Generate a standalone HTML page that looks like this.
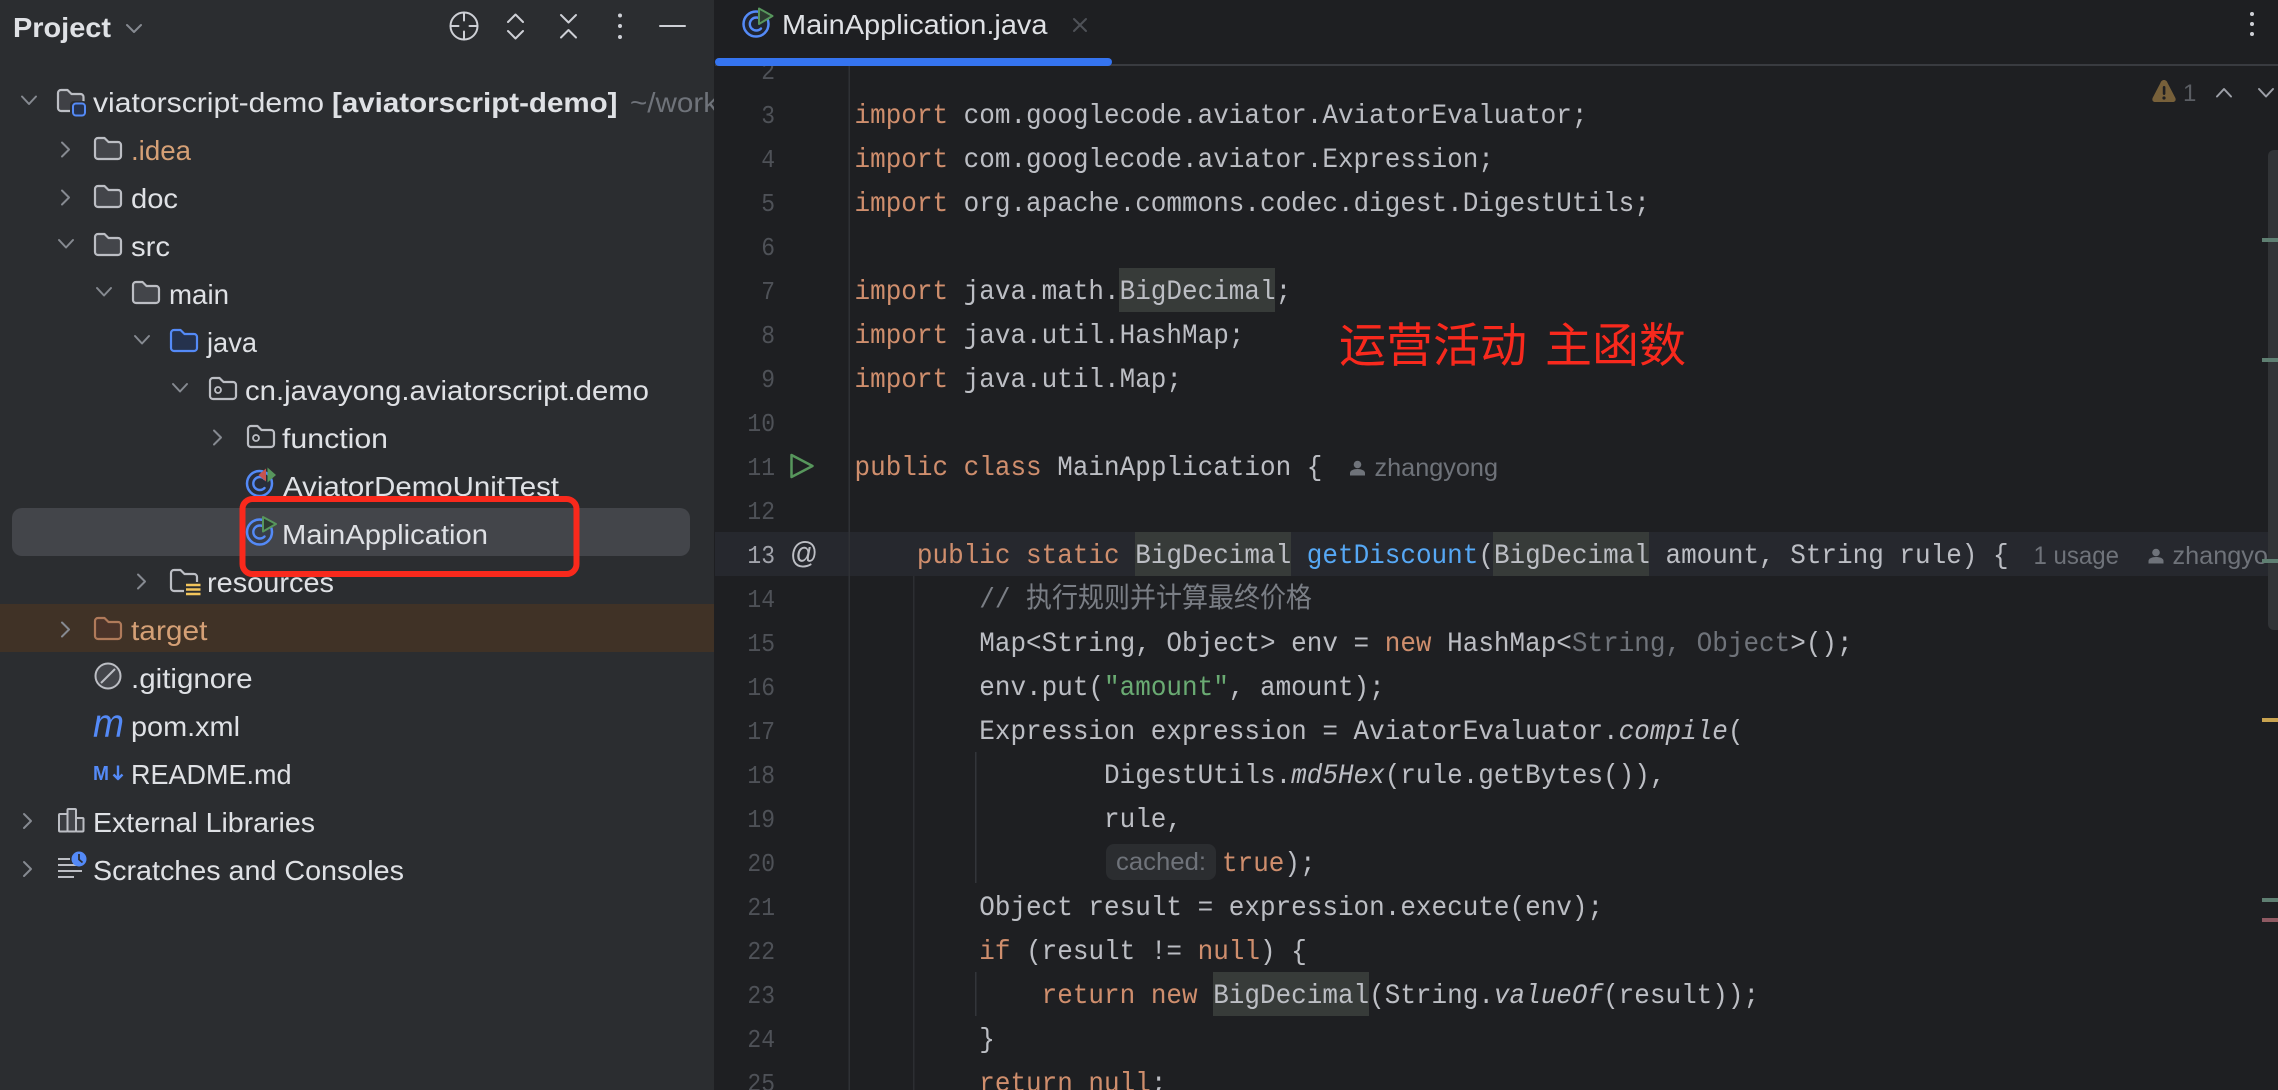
<!DOCTYPE html>
<html lang="en">
<head>
<meta charset="utf-8">
<title>MainApplication.java</title>
<style>
html,body{margin:0;padding:0;background:#1e1f22;width:2278px;height:1090px;overflow:hidden}
svg{display:block}
text{white-space:pre}
.ui{font-family:"Liberation Sans","Noto Sans CJK SC",sans-serif;font-size:28px;fill:#dfe1e5}
.code{font-family:"Liberation Mono","Noto Sans CJK SC",monospace;font-size:26px;fill:#bcbec4}
.num{font-family:"Liberation Mono",monospace;font-size:23px;fill:#4e5157;text-anchor:end}
.k{fill:#cf8e6d}.m{fill:#56a8f5}.s{fill:#6aab73}.c{fill:#7a7e85}.g{fill:#6f737a}.i{font-style:italic}
.hint{font-family:"Liberation Sans",sans-serif;font-size:25px;fill:#6f737a}
.ch{fill:none;stroke:#868a91;stroke-width:2;stroke-linecap:round;stroke-linejoin:round}
.tb{fill:none;stroke:#ced0d6;stroke-width:2;stroke-linecap:round;stroke-linejoin:round}
.fd{fill:#43454a;stroke:#bcbec4;stroke-width:2.2;stroke-linejoin:round}
.fb{fill:#25324d;stroke:#548af7;stroke-width:2.2;stroke-linejoin:round}
.fo{fill:#4b3329;stroke:#b07a5a;stroke-width:2.2;stroke-linejoin:round}
.fp{fill:none;stroke:#bcbec4;stroke-width:2.2;stroke-linejoin:round}
</style>
</head>
<body>
<svg xmlns="http://www.w3.org/2000/svg" width="2278" height="1090" viewBox="0 0 2278 1090">
<rect width="2278" height="1090" fill="#1e1f22"/>

<!-- editor backgrounds -->
<rect x="715" y="532" width="1563" height="44" fill="#26282e"/>
<rect x="1119" y="268" width="156" height="44" fill="#373b39"/>
<rect x="1135" y="532" width="156" height="44" fill="#373b39"/>
<rect x="1493" y="532" width="156" height="44" fill="#373b39"/>
<rect x="1213" y="972" width="156" height="44" fill="#373b39"/>
<rect x="848.5" y="66" width="1.5" height="1024" fill="#2f3135"/>
<rect x="913" y="576" width="1.5" height="514" fill="#2c2e32"/>
<rect x="975" y="752" width="1.5" height="131" fill="#33353a"/>
<rect x="975" y="972" width="1.5" height="44" fill="#33353a"/>

<!-- line numbers -->
<g class="num">
<text transform="translate(775,79) scale(1,1.12)">2</text>
<text transform="translate(775,123) scale(1,1.12)">3</text>
<text transform="translate(775,167) scale(1,1.12)">4</text>
<text transform="translate(775,211) scale(1,1.12)">5</text>
<text transform="translate(775,255) scale(1,1.12)">6</text>
<text transform="translate(775,299) scale(1,1.12)">7</text>
<text transform="translate(775,343) scale(1,1.12)">8</text>
<text transform="translate(775,387) scale(1,1.12)">9</text>
<text transform="translate(775,431) scale(1,1.12)">10</text>
<text transform="translate(775,475) scale(1,1.12)">11</text>
<text transform="translate(775,519) scale(1,1.12)">12</text>
<text transform="translate(775,563) scale(1,1.12)" style="fill:#a1a3ab">13</text>
<text transform="translate(775,607) scale(1,1.12)">14</text>
<text transform="translate(775,651) scale(1,1.12)">15</text>
<text transform="translate(775,695) scale(1,1.12)">16</text>
<text transform="translate(775,739) scale(1,1.12)">17</text>
<text transform="translate(775,783) scale(1,1.12)">18</text>
<text transform="translate(775,827) scale(1,1.12)">19</text>
<text transform="translate(775,871) scale(1,1.12)">20</text>
<text transform="translate(775,915) scale(1,1.12)">21</text>
<text transform="translate(775,959) scale(1,1.12)">22</text>
<text transform="translate(775,1003) scale(1,1.12)">23</text>
<text transform="translate(775,1047) scale(1,1.12)">24</text>
<text transform="translate(775,1091) scale(1,1.12)">25</text>
</g>

<!-- gutter icons -->
<path d="M791.5 455 L812.5 466 L791.5 477 Z" fill="none" stroke="#57965c" stroke-width="2.5" stroke-linejoin="round"/>
<text x="790" y="563" class="ui" style="font-size:31px;fill:#bcbec4" textLength="28" lengthAdjust="spacingAndGlyphs">@</text>

<!-- code -->
<g class="code">
<text transform="translate(854.5,123) scale(1,1.08)"><tspan class="k">import</tspan> com.googlecode.aviator.AviatorEvaluator;</text>
<text transform="translate(854.5,167) scale(1,1.08)"><tspan class="k">import</tspan> com.googlecode.aviator.Expression;</text>
<text transform="translate(854.5,211) scale(1,1.08)"><tspan class="k">import</tspan> org.apache.commons.codec.digest.DigestUtils;</text>
<text transform="translate(854.5,299) scale(1,1.08)"><tspan class="k">import</tspan> java.math.BigDecimal;</text>
<text transform="translate(854.5,343) scale(1,1.08)"><tspan class="k">import</tspan> java.util.HashMap;</text>
<text transform="translate(854.5,387) scale(1,1.08)"><tspan class="k">import</tspan> java.util.Map;</text>
<text transform="translate(854.5,475) scale(1,1.08)"><tspan class="k">public class</tspan> MainApplication {</text>
<text transform="translate(854.5,563) scale(1,1.08)">    <tspan class="k">public static</tspan> BigDecimal <tspan class="m">getDiscount</tspan>(BigDecimal amount, String rule) {</text>
<text transform="translate(854.5,607) scale(1,1.08)" class="c">        // <tspan style="font-size:26px">执行规则并计算最终价格</tspan></text>
<text transform="translate(854.5,651) scale(1,1.08)">        Map&lt;String, Object&gt; env = <tspan class="k">new</tspan> HashMap&lt;<tspan class="g">String, Object</tspan>&gt;();</text>
<text transform="translate(854.5,695) scale(1,1.08)">        env.put(<tspan class="s">"amount"</tspan>, amount);</text>
<text transform="translate(854.5,739) scale(1,1.08)">        Expression expression = AviatorEvaluator.<tspan class="i">compile</tspan>(</text>
<text transform="translate(854.5,783) scale(1,1.08)">                DigestUtils.<tspan class="i">md5Hex</tspan>(rule.getBytes()),</text>
<text transform="translate(854.5,827) scale(1,1.08)">                rule,</text>
<text transform="translate(1222,871) scale(1,1.08)"><tspan class="k">true</tspan>);</text>
<text transform="translate(854.5,915) scale(1,1.08)">        Object result = expression.execute(env);</text>
<text transform="translate(854.5,959) scale(1,1.08)">        <tspan class="k">if</tspan> (result != <tspan class="k">null</tspan>) {</text>
<text transform="translate(854.5,1003) scale(1,1.08)">            <tspan class="k">return new</tspan> BigDecimal(String.<tspan class="i">valueOf</tspan>(result));</text>
<text transform="translate(854.5,1047) scale(1,1.08)">        }</text>
<text transform="translate(854.5,1091) scale(1,1.08)">        <tspan class="k">return null</tspan>;</text>
</g>

<!-- inlay hints -->
<rect x="1106" y="844" width="110" height="36" rx="8" fill="#2b2d30"/>
<text x="1116" y="870" class="hint" textLength="90" lengthAdjust="spacingAndGlyphs">cached:</text>
<g fill="#6f737a">
<circle cx="1357.5" cy="464.5" r="3.8"/><path d="M1350 475.5v-2.5c0-2.5 3.5-4 7.5-4s7.5 1.500 7.500 4v2.500z"/>
<circle cx="2156" cy="552.500" r="3.800"/><path d="M2148.500 563.500v-2.500c0-2.500 3.500-4 7.500-4s7.500 1.500 7.500 4v2.500z"/>
</g>
<text x="1374.500" y="476" class="hint" textLength="123.500" lengthAdjust="spacingAndGlyphs">zhangyong</text>
<text x="2033.500" y="564" class="hint" textLength="85.500" lengthAdjust="spacingAndGlyphs">1 usage</text>
<text x="2172.500" y="564" class="hint" textLength="123.500" lengthAdjust="spacingAndGlyphs">zhangyong</text>

<!-- annotation -->
<g style="font-family:'Liberation Sans','Noto Sans CJK SC',sans-serif;font-size:47px;fill:#f8291d">
<text x="1339" y="362">运营活动</text>
<text x="1545" y="362">主函数</text>
</g>

<!-- scrollbar and stripes -->
<path d="M2278 150h-4a6 6 0 0 0-6 6v468a6 6 0 0 0 6 6h4z" fill="#323437"/>
<rect x="2262" y="238" width="16" height="4" fill="#5f7f72"/>
<rect x="2262" y="358" width="16" height="4" fill="#5f7f72"/>
<rect x="2262" y="559" width="16" height="4" fill="#5f7f72"/>
<rect x="2262" y="718" width="16" height="4" fill="#c9a350"/>
<rect x="2262" y="898" width="16" height="4" fill="#5f7f72"/>
<rect x="2262" y="918" width="16" height="4" fill="#8f5a63"/>

<!-- warning + navigation -->
<path d="M2164 80c1.800 0 3 1.200 3.600 3l7.800 15c.8 2-.2 4-2.400 4h-18c-2.200 0-3.200-2-2.400-4l7.800-15c.6-1.800 1.800-3 3.600-3z" fill="#77603a"/>
<rect x="2162.800" y="86" width="2.600" height="9" rx="1.200" fill="#1e1f22"/>
<circle cx="2164" cy="98" r="1.600" fill="#1e1f22"/>
<text x="2183" y="101" class="ui" style="font-size:24px;fill:#5b5e64">1</text>
<path d="M2217 96.500l7-7.500 7 7.500M2259 89l7 7.500 7-7.500" fill="none" stroke="#9da0a8" stroke-width="2" stroke-linecap="round" stroke-linejoin="round"/>

<!-- tab bar -->
<rect x="715" y="0" width="1563" height="64" fill="#1e1f22"/>
<rect x="715" y="64" width="1563" height="2" fill="#393b40"/>
<rect x="715" y="58" width="397" height="8" rx="4" fill="#3574f0"/>
<g transform="translate(496.500,-508)">
<circle cx="259.500" cy="532" r="12.500" fill="#25324d" fill-opacity=".35" stroke="#548af7" stroke-width="2.500"/>
<path d="M264.500 527.500a6.500 6.500 0 1 0 0 9" fill="none" stroke="#548af7" stroke-width="2.400" stroke-linecap="round"/>
<path d="M262.500 516.500L276 524 262.500 532Z" fill="#2d3a30" stroke="#57965c" stroke-width="2" stroke-linejoin="round"/>
</g>
<text x="782" y="34" class="ui" textLength="265.500" lengthAdjust="spacingAndGlyphs">MainApplication.java</text>
<path d="M1074 19l12 12M1086 19l-12 12" fill="none" stroke="#4e5157" stroke-width="2" stroke-linecap="round"/>
<g fill="#ced0d6"><circle cx="2252" cy="14" r="2"/><circle cx="2252" cy="24" r="2"/><circle cx="2252" cy="34" r="2"/></g>

<!-- sidebar -->
<rect x="0" y="0" width="714" height="1090" fill="#2b2d30"/>
<rect x="0" y="604" width="714" height="48" fill="#403226"/>
<rect x="12" y="508" width="678" height="48" rx="10" fill="#43454a"/>

<!-- header -->
<text x="13" y="37" class="ui" style="font-weight:700" textLength="98" lengthAdjust="spacingAndGlyphs">Project</text>
<path d="M127 25l7 7 7-7" class="ch"/>
<g class="tb">
<circle cx="464" cy="26" r="13.500"/>
<path d="M464 12.500v8M464 31.500v8M450.500 26h8M469.500 26h8"/>
<path d="M508 22l7.500-7.500 7.500 7.500M508 31l7.500 7.500 7.500-7.500"/>
<path d="M561 15l7.500 7.500 7.500-7.500M561 37.500l7.500-7.500 7.500 7.500"/>
<path d="M660 26h25"/>
</g>
<g fill="#ced0d6"><circle cx="620" cy="15.500" r="2"/><circle cx="620" cy="26" r="2"/><circle cx="620" cy="37" r="2"/></g>

<!-- tree chevrons -->
<g class="ch">
<path d="M22 96.500l7 7.500 7-7.500"/>
<path d="M62 142.500l7 7-7 7"/>
<path d="M62 190.500l7 7-7 7"/>
<path d="M59 240l7 7.500 7-7.500"/>
<path d="M97 288l7 7.500 7-7.500"/>
<path d="M135 336l7 7.500 7-7.500"/>
<path d="M173 384l7 7.500 7-7.500"/>
<path d="M214 430.500l7 7-7 7"/>
<path d="M138 574.500l7 7-7 7"/>
<path d="M62 622.500l7 7-7 7"/>
<path d="M24 814l7 7-7 7"/>
<path d="M24 862l7 7-7 7"/>
</g>

<!-- folders -->
<path transform="translate(57,89)" class="fd" style="fill:#3f4045" d="M1 4a3 3 0 0 1 3-3h6.500l4 4h9a3 3 0 0 1 3 3v11a3 3 0 0 1-3 3h-19.500a3 3 0 0 1-3-3z"/>
<rect x="70" y="101" width="17" height="16" rx="4" fill="#2b2d30"/>
<rect x="73" y="103.500" width="12" height="12" rx="3" fill="#25324d" stroke="#548af7" stroke-width="2"/>
<path transform="translate(94,137)" class="fd" d="M1 4a3 3 0 0 1 3-3h6.500l4 4h9.500a3 3 0 0 1 3 3v11a3 3 0 0 1-3 3h-20a3 3 0 0 1-3-3z"/>
<path transform="translate(94,185)" class="fd" d="M1 4a3 3 0 0 1 3-3h6.500l4 4h9.500a3 3 0 0 1 3 3v11a3 3 0 0 1-3 3h-20a3 3 0 0 1-3-3z"/>
<path transform="translate(94,233)" class="fd" d="M1 4a3 3 0 0 1 3-3h6.500l4 4h9.500a3 3 0 0 1 3 3v11a3 3 0 0 1-3 3h-20a3 3 0 0 1-3-3z"/>
<path transform="translate(132,281)" class="fd" d="M1 4a3 3 0 0 1 3-3h6.500l4 4h9.500a3 3 0 0 1 3 3v11a3 3 0 0 1-3 3h-20a3 3 0 0 1-3-3z"/>
<path transform="translate(170,329)" class="fb" d="M1 4a3 3 0 0 1 3-3h6.500l4 4h9.500a3 3 0 0 1 3 3v11a3 3 0 0 1-3 3h-20a3 3 0 0 1-3-3z"/>
<path transform="translate(209,377)" class="fp" d="M1 4a3 3 0 0 1 3-3h6.500l4 4h9.500a3 3 0 0 1 3 3v11a3 3 0 0 1-3 3h-20a3 3 0 0 1-3-3z"/>
<circle cx="218" cy="390" r="3" fill="none" stroke="#bcbec4" stroke-width="1.800"/>
<path transform="translate(247,425)" class="fp" d="M1 4a3 3 0 0 1 3-3h6.500l4 4h9.500a3 3 0 0 1 3 3v11a3 3 0 0 1-3 3h-20a3 3 0 0 1-3-3z"/>
<circle cx="256" cy="438" r="3" fill="none" stroke="#bcbec4" stroke-width="1.800"/>
<path transform="translate(170,569)" class="fp" d="M1 4a3 3 0 0 1 3-3h6.500l4 4h9.500a3 3 0 0 1 3 3v11a3 3 0 0 1-3 3h-20a3 3 0 0 1-3-3z"/>
<rect x="184" y="582" width="18" height="14" fill="#2b2d30"/>
<path d="M186 585h14.500M186 589.500h14.500M186 594h14.500" stroke="#f2c55c" stroke-width="2.400" fill="none"/>
<path transform="translate(94,617)" class="fo" d="M1 4a3 3 0 0 1 3-3h6.500l4 4h9.500a3 3 0 0 1 3 3v11a3 3 0 0 1-3 3h-20a3 3 0 0 1-3-3z"/>

<!-- class icons -->
<g transform="translate(0,-48.500)">
<circle cx="259.500" cy="532" r="12.500" fill="#25324d" fill-opacity=".35" stroke="#548af7" stroke-width="2.500"/>
<path d="M264.500 527.500a6.500 6.500 0 1 0 0 9" fill="none" stroke="#548af7" stroke-width="2.400" stroke-linecap="round"/>
<path d="M266 517L258.500 523.500 266 530Z" fill="#c75450"/>
<path d="M267.500 516L276 523.500 267.500 531Z" fill="#57965c"/>
</g>
<circle cx="259.500" cy="532" r="12.500" fill="#25324d" fill-opacity=".35" stroke="#548af7" stroke-width="2.500"/>
<path d="M264.500 527.500a6.500 6.500 0 1 0 0 9" fill="none" stroke="#548af7" stroke-width="2.400" stroke-linecap="round"/>
<path d="M263 517L276 524 263 531.500Z" fill="#2d3a30" stroke="#57965c" stroke-width="2" stroke-linejoin="round"/>

<!-- file icons -->
<circle cx="108" cy="676" r="12.500" fill="#43454a" stroke="#bcbec4" stroke-width="2"/>
<path d="M101 683l14-14" stroke="#bcbec4" stroke-width="2" fill="none"/>
<text x="93" y="737" class="ui" style="font-size:40px;font-style:italic;fill:#548af7" textLength="31" lengthAdjust="spacingAndGlyphs">m</text>
<text x="93" y="780" class="ui" style="font-size:20px;font-weight:700;fill:#548af7" textLength="16" lengthAdjust="spacingAndGlyphs">M</text>
<path d="M118 765.500v13M113.500 774.500l4.500 4.500 4.500-4.500" fill="none" stroke="#548af7" stroke-width="2.400" stroke-linejoin="round"/>

<!-- library + scratches -->
<g fill="#3a3c40" stroke="#bcbec4" stroke-width="2" stroke-linejoin="round">
<rect x="59" y="814" width="8.500" height="17.500" rx="1"/>
<rect x="67.500" y="809" width="8.500" height="22.500" rx="1" fill="#43454a"/>
<rect x="76" y="818" width="7.500" height="13.500" rx="1"/>
</g>
<path d="M58 859h12M58 865h19M58 871h24M58 877h16" stroke="#bcbec4" stroke-width="2" fill="none"/>
<circle cx="79" cy="859" r="7.500" fill="#548af7"/>
<path d="M79 854v5.500l3.500 3" stroke="#2b2d30" stroke-width="1.800" fill="none"/>

<!-- tree labels -->
<text x="93" y="112" class="ui" textLength="231" lengthAdjust="spacingAndGlyphs">viatorscript-demo</text>
<text x="332" y="112" class="ui" style="font-weight:700" textLength="285.500" lengthAdjust="spacingAndGlyphs">[aviatorscript-demo]</text>
<svg x="625" y="80" width="89" height="50"><text x="5" y="32" class="ui" style="fill:#6f737a" textLength="88" lengthAdjust="spacingAndGlyphs">~/work</text></svg>
<text x="131" y="160" class="ui" style="fill:#d5a076" textLength="60" lengthAdjust="spacingAndGlyphs">.idea</text>
<text x="131" y="208" class="ui" textLength="47" lengthAdjust="spacingAndGlyphs">doc</text>
<text x="131" y="256" class="ui" textLength="39" lengthAdjust="spacingAndGlyphs">src</text>
<text x="169" y="304" class="ui" textLength="60" lengthAdjust="spacingAndGlyphs">main</text>
<text x="207" y="352" class="ui" textLength="50" lengthAdjust="spacingAndGlyphs">java</text>
<text x="245" y="400" class="ui" textLength="404" lengthAdjust="spacingAndGlyphs">cn.javayong.aviatorscript.demo</text>
<text x="282" y="448" class="ui" textLength="106" lengthAdjust="spacingAndGlyphs">function</text>
<text x="283" y="496" class="ui" textLength="276" lengthAdjust="spacingAndGlyphs">AviatorDemoUnitTest</text>
<text x="282" y="544" class="ui" textLength="206" lengthAdjust="spacingAndGlyphs">MainApplication</text>
<text x="207" y="592" class="ui" textLength="127" lengthAdjust="spacingAndGlyphs">resources</text>
<text x="131" y="640" class="ui" style="fill:#d5a076" textLength="76.500" lengthAdjust="spacingAndGlyphs">target</text>
<text x="131" y="688" class="ui" textLength="121.500" lengthAdjust="spacingAndGlyphs">.gitignore</text>
<text x="131" y="736" class="ui" textLength="109" lengthAdjust="spacingAndGlyphs">pom.xml</text>
<text x="131" y="784" class="ui" textLength="160.500" lengthAdjust="spacingAndGlyphs">README.md</text>
<text x="93" y="832" class="ui" textLength="222" lengthAdjust="spacingAndGlyphs">External Libraries</text>
<text x="93" y="880" class="ui" textLength="311" lengthAdjust="spacingAndGlyphs">Scratches and Consoles</text>

<!-- red annotation box -->
<rect x="242.500" y="499" width="334" height="75" rx="10" fill="none" stroke="#f9291c" stroke-width="6"/>
</svg>
</body>
</html>
